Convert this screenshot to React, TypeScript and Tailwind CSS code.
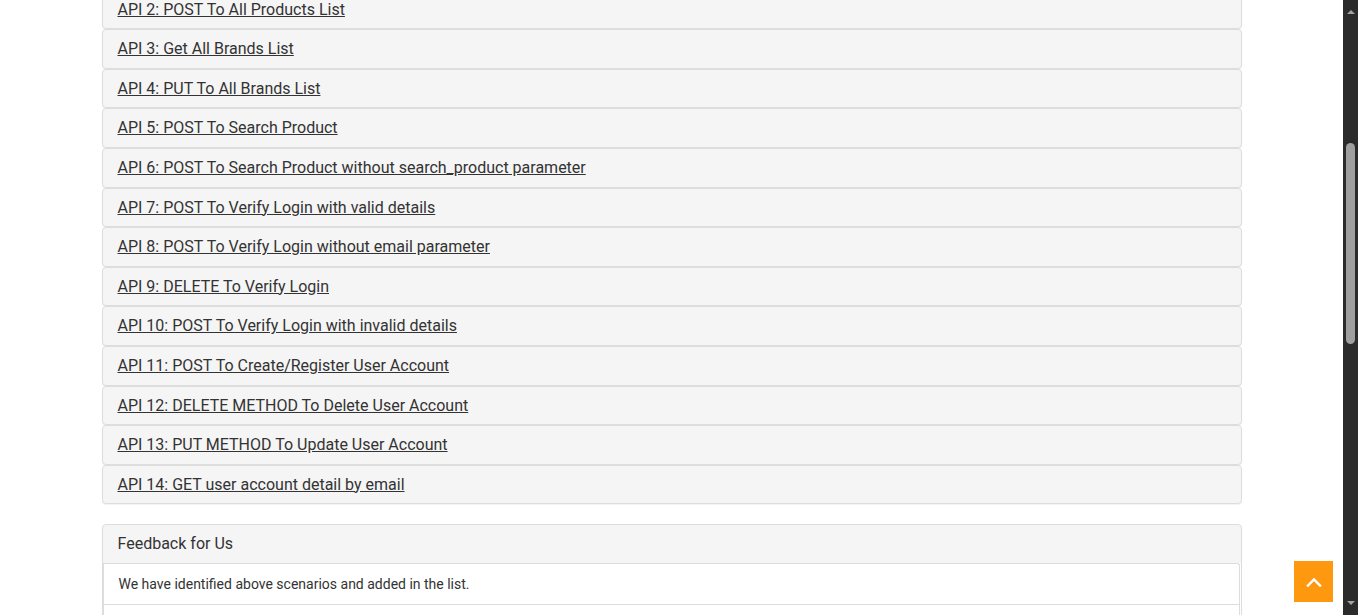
import React from "react";

const apis = [
  "API 2: POST To All Products List",
  "API 3: Get All Brands List",
  "API 4: PUT To All Brands List",
  "API 5: POST To Search Product",
  "API 6: POST To Search Product without search_product parameter",
  "API 7: POST To Verify Login with valid details",
  "API 8: POST To Verify Login without email parameter",
  "API 9: DELETE To Verify Login",
  "API 10: POST To Verify Login with invalid details",
  "API 11: POST To Create/Register User Account",
  "API 12: DELETE METHOD To Delete User Account",
  "API 13: PUT METHOD To Update User Account",
  "API 14: GET user account detail by email",
];

export default function App() {
  return (
    <div
      className="relative flex h-[615px] w-full overflow-hidden bg-white text-[#333]"
      style={{ fontFamily: "Roboto, 'Liberation Sans', sans-serif" }}
    >
      <div className="flex-1 overflow-hidden">
        <div className="mx-auto mt-[-10.4px] w-[1140px]">
          <div className="flex flex-col">
            {apis.map((t) => (
              <div
                key={t}
                className="rounded-[4px] border border-[#ddd] bg-[#f5f5f5] px-[15px] py-[10px] shadow-[0_1px_1px_rgba(0,0,0,0.05)]"
              >
                <h4 className="m-0 text-[16px] leading-[1.1] font-normal">
                  <a className="cursor-pointer text-[#333] underline">{t}</a>
                </h4>
              </div>
            ))}
          </div>
          <div className="mt-[20px] rounded-[4px] border border-[#ddd] bg-[#f5f5f5] shadow-[0_1px_1px_rgba(0,0,0,0.05)]">
            <div className="px-[15px] py-[10px]">
              <h4 className="m-0 text-[16px] leading-[1.1] font-normal text-[#333]">
                Feedback for Us
              </h4>
            </div>
            <div className="bg-white">
              <div className="mr-[1px] rounded-tr-[3px] border-t border-r border-l border-[#ddd] px-[15px] py-[10px] text-[14px] leading-[20px] text-[#333]">
                We have identified above scenarios and added in the list.
              </div>
              <div className="mr-[1px] h-[40px] border-t border-r border-l border-[#ddd]" />
            </div>
          </div>
        </div>
      </div>

      {/* fake scrollbar */}
      <div className="flex w-[15px] flex-col items-center bg-[#2b2b2b]">
        <div className="flex h-[17px] w-full items-center justify-center pt-[6px]">
          <div className="h-0 w-0 border-x-[4px] border-b-[4px] border-x-transparent border-b-[#a3a3a3]" />
        </div>
        <div className="mt-[126px] h-[201px] w-[9px] rounded-full bg-[#9f9f9f]" />
        <div className="flex-1" />
        <div className="flex h-[17px] w-full items-start justify-center pt-[3px]">
          <div className="h-0 w-0 border-x-[4px] border-t-[4px] border-x-transparent border-t-[#a3a3a3]" />
        </div>
      </div>

      {/* scroll up button */}
      <a className="absolute left-[1294px] top-[561px] flex h-[41px] w-[39px] items-center justify-center bg-[#fe980f]">
        <svg width="16" height="10" viewBox="0 0 16 10" fill="none">
          <path d="M2 8.5 L8 2.5 L14 8.5" stroke="white" strokeWidth="2.4" strokeLinecap="square" />
        </svg>
      </a>
    </div>
  );
}
